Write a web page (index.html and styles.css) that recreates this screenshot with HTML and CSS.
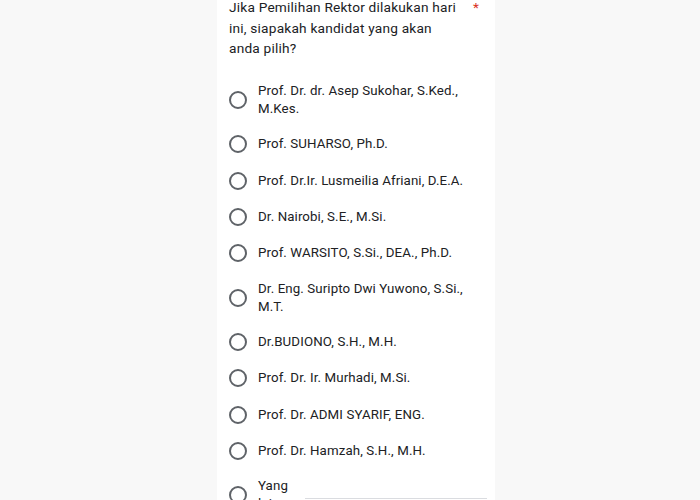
FILE: index.html
```html
<!DOCTYPE html>
<html>
<head>
<meta charset="utf-8">
<link rel="stylesheet" href="styles.css">
</head>
<body>
<div class="card">
  <div class="question">
    <div class="qtext">Jika Pemilihan Rektor dilakukan hari ini, siapakah kandidat yang akan anda pilih?</div>
    <span class="req">*</span>
  </div>
  <div class="options">
    <div class="opt"><span class="radio"></span><span class="label">Prof. Dr. dr. Asep Sukohar, S.Ked., M.Kes.</span></div>
    <div class="opt"><span class="radio"></span><span class="label">Prof. SUHARSO, Ph.D.</span></div>
    <div class="opt"><span class="radio"></span><span class="label">Prof. Dr.Ir. Lusmeilia Afriani, D.E.A.</span></div>
    <div class="opt"><span class="radio"></span><span class="label">Dr. Nairobi, S.E., M.Si.</span></div>
    <div class="opt"><span class="radio"></span><span class="label">Prof. WARSITO, S.Si., DEA., Ph.D.</span></div>
    <div class="opt"><span class="radio"></span><span class="label">Dr. Eng. Suripto Dwi Yuwono, S.Si., M.T.</span></div>
    <div class="opt"><span class="radio"></span><span class="label">Dr.BUDIONO, S.H., M.H.</span></div>
    <div class="opt"><span class="radio"></span><span class="label">Prof. Dr. Ir. Murhadi, M.Si.</span></div>
    <div class="opt"><span class="radio"></span><span class="label">Prof. Dr. ADMI SYARIF, ENG.</span></div>
    <div class="opt"><span class="radio"></span><span class="label">Prof. Dr. Hamzah, S.H., M.H.</span></div>
    <div class="opt other"><span class="radio"></span><span class="label short">Yang lain:</span><span class="input"></span></div>
  </div>
</div>
</body>
</html>
```
FILE: styles.css
```css
html, body {
  margin: 0;
  padding: 0;
  background: #f8f8f8;
  font-family: Roboto, "Liberation Sans", sans-serif;
  color: #202124;
  overflow: hidden;
}
.card {
  width: 278px;
  margin: -3px 0 0 217px;
  background: #fff;
  padding: 0 8px 0 12px;
  box-sizing: border-box;
  min-height: 520px;
}
.question {
  display: flex;
  align-items: flex-start;
  font-size: 13.7px;
  line-height: 20.5px;
  letter-spacing: 0.2px;
}
.qtext {
  width: 231px;
}
.req {
  color: #d93025;
  margin-left: 13px;
}
.options {
  margin-top: 15.5px;
}
.opt {
  display: flex;
  align-items: center;
  padding: 7.97px 0;
  font-size: 13.3px;
  line-height: 18px;
  letter-spacing: 0.1px;
}
.radio {
  flex: none;
  width: 14px;
  height: 14px;
  border: 2px solid #5f6368;
  border-radius: 50%;
  margin: 1.25px 11px 1.25px 0;
}
.label {
  width: 212px;
}
.label.short {
  width: 36px;
}
.input {
  flex: 1;
  height: 1px;
  background: #dadce0;
  margin: 6px 0 0 11px;
}
```
